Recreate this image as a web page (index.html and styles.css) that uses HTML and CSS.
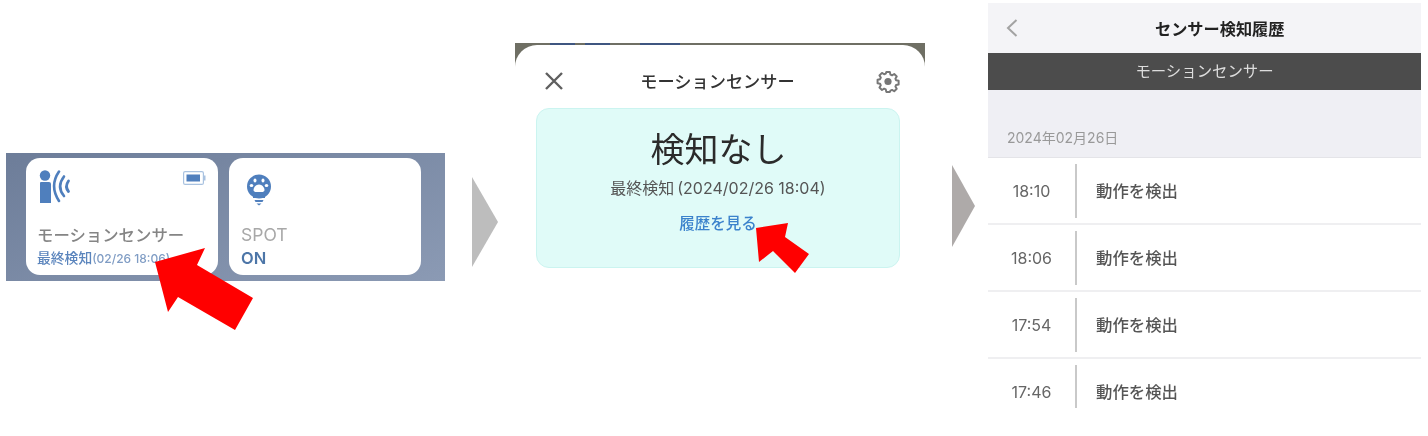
FILE: index.html
```html
<html>
	<head>
		<meta charset="UTF-8">
		<title>モーションセンサー</title>
		<link rel="stylesheet" href="styles.css">
	</head>
	<body>
		<div class="page">
			<div class="tiles">
				<div class="tile">
					<div class="tile-top">
						<svg class="sensor" viewBox="0 0 34 34" width="34" height="34">
							<circle cx="7" cy="5.500" r="5.200" fill="#4f7fbd"/>
							<path d="M3 12h8q2 0 2 2v19H2V13q0-1 1-1z" fill="#4f7fbd"/>
							<g fill="none" stroke="#4f7fbd" stroke-linecap="round">
								<path d="M21 1.500C14.500 11 14.500 21 21 31" stroke-width="2.600"/>
								<path d="M26 6.500C21 13 21 20 26 26" stroke-width="2.600"/>
								<path d="M30.500 11C28 14.500 28 18.500 30.500 21.500" stroke-width="2.800"/>
							</g>
						</svg>
						<svg class="battery" viewBox="0 0 23 14" width="23" height="14">
							<rect x="0.600" y="0.600" width="19.800" height="12.800" rx="1.500" fill="#fff" stroke="#a9c2e0" stroke-width="1.200"/>
							<rect x="3.500" y="3.500" width="13.500" height="7" fill="#4f7fbd"/>
							<path d="M21 4.500h1.500v5H21z" fill="#a9c2e0"/>
						</svg>
					</div>
					<div class="tile-name">モーションセンサー</div>
					<div class="tile-last">最終検知<span class="tile-time">(02/26 18:06)</span></div>
				</div>
				<div class="tile">
					<div class="tile-top">
						<svg class="bulb" viewBox="0 0 26 32" width="26" height="32">
							<circle cx="13" cy="12.500" r="12" fill="#4f7fbd"/>
							<path d="M7 22h12v2H7z" fill="#4f7fbd"/>
							<path d="M8.500 26h9l-1 2h-7zM10.500 29.500h5L13 31.500z" fill="#4f7fbd"/>
							<g fill="#fff">
								<path d="M13 10.500c3 0 5.500 3 5.500 5.500 0 1.500-1.500 2-2.500 2h-6c-1 0-2.500-.5-2.500-2 0-2.500 2.500-5.500 5.500-5.500z"/>
								<ellipse cx="5.500" cy="11.500" rx="1.800" ry="1.500"/>
								<ellipse cx="9" cy="6.500" rx="1.500" ry="1.900"/>
								<ellipse cx="17" cy="6.500" rx="1.500" ry="1.900"/>
								<ellipse cx="20.500" cy="11.500" rx="1.800" ry="1.500"/>
							</g>
						</svg>
					</div>
					<div class="tile-name spot">SPOT</div>
					<div class="tile-on">ON</div>
				</div>
			</div>
			<div class="chevron first"></div>
			<div class="sheet">
				<div class="sheet-peek"></div>
				<div class="sheet-in">
					<div class="sheet-head">
						<svg viewBox="0 0 18 18" width="18" height="18">
							<path d="M1 1l16 16M17 1L1 17" stroke="#5f5f5f" stroke-width="2.400" fill="none"/>
						</svg>
						<div class="sheet-title">モーションセンサー</div>
						<svg viewBox="0 0 24 24" width="24" height="24">
							<path d="M10 2h4l.6 2.800 1.800.8 2.400-1.500 2.800 2.800-1.500 2.400.8 1.800 2.800.6v4l-2.800.6-.8 1.800 1.500 2.400-2.800 2.800-2.400-1.500-1.800.8L14 24h-4l-.6-2.800-1.800-.8-2.400 1.500-2.800-2.800 1.500-2.400-.8-1.800L.3 14.500v-4l2.800-.6.8-1.800-1.500-2.400 2.800-2.800 2.400 1.500 1.800-.8z" transform="translate(1.300 1.300) scale(.9)" fill="none" stroke="#777" stroke-width="2.200" stroke-linejoin="round"/>
							<circle cx="12" cy="12.500" r="3.600" fill="#777"/>
						</svg>
					</div>
					<div class="status">
						<div class="status-big">検知なし</div>
						<div class="status-last">最終検知&#8201;(2024/02/26 18:04)</div>
						<div class="status-link">履歴を見る</div>
					</div>
				</div>
			</div>
			<div class="chevron second"></div>
			<div class="history">
				<div class="history-head">
					<svg viewBox="0 0 12 18" width="12" height="18">
						<path d="M10.500 1L2 9l8.500 8" fill="none" stroke="#a3a3a3" stroke-width="2"/>
					</svg>
					<div class="history-title">センサー検知履歴</div>
				</div>
				<div class="history-bar">モーションセンサー</div>
				<div class="history-date">2024年02月26日</div>
				<div class="row"><div class="row-time">18:10</div><div class="row-line"></div><div class="row-text">動作を検出</div></div>
				<div class="row"><div class="row-time">18:06</div><div class="row-line"></div><div class="row-text">動作を検出</div></div>
				<div class="row"><div class="row-time">17:54</div><div class="row-line"></div><div class="row-text">動作を検出</div></div>
				<div class="row last"><div class="row-time">17:46</div><div class="row-line"></div><div class="row-text">動作を検出</div></div>
			</div>
			<svg class="pointers" viewBox="0 0 1428 436" width="1428" height="436">
				<polygon points="205,248 155,262 168,312 178,297 235,330 253,298 197,265" fill="#ff0000"/>
				<polygon points="788,223 756,228 759,262 773,251 795,273 809,254 785,237" fill="#ff0000"/>
			</svg>
		</div>
	</body>
</html>
```

FILE: styles.css
```css
body {
	margin: 0;
	background: #fff;
	font-family: "Inter", "Noto Sans CJK JP", sans-serif;
}
.page {
	display: flex;
	align-items: flex-start;
	position: relative;
	width: 1428px;
	height: 436px;
	overflow: hidden;
}
.tiles, .sheet, .history {
	filter: blur(0.6px);
}

/* first panel */
.tiles {
	display: flex;
	gap: 11px;
	box-sizing: border-box;
	width: 439px;
	height: 128px;
	margin: 153px 0 0 6px;
	padding: 5px 0 0 20px;
	background: linear-gradient(160deg, #6d7d99, #8b9ab4);
}
.tile {
	box-sizing: border-box;
	width: 192px;
	height: 117px;
	padding: 12px 11px 0 11px;
	background: #fff;
	border-radius: 14px;
}
.tile-top {
	display: flex;
	justify-content: space-between;
	height: 53px;
}
.sensor { margin-left: 1px; }
.battery { margin: 1px 1px 0 0; }
.bulb { margin: 4px 0 0 6px; }
.tile-name {
	font-size: 16.400px;
	font-weight: 500;
	line-height: 24px;
	color: #858585;
	white-space: nowrap;
}
.tile-name.spot {
	font-size: 17.500px;
	font-weight: 400;
	margin-left: 1px;
	color: #a8a8a8;
}
.tile-last {
	font-size: 13.800px;
	font-weight: 500;
	line-height: 20px;
	margin-top: 1px;
	color: #5b85bd;
	white-space: nowrap;
}
.tile-time { font-size: 12px; color: #7f9cc4; }
.tile-on {
	font-size: 16.500px;
	font-weight: 600;
	line-height: 20px;
	margin: 1px 0 0 1px;
	color: #4d76a8;
}

/* arrows between panels */
.chevron {
	background: #bdbdbd;
	clip-path: polygon(0 0, 100% 50%, 0 100%);
}
.chevron.first {
	flex: none;
	width: 26px;
	height: 90px;
	margin: 177px 0 0 27px;
}
.chevron.second {
	flex: none;
	width: 23px;
	height: 82px;
	margin: 165px 0 0 27px;
	background: #aeaaa9;
}

/* second panel */
.sheet {
	flex: none;
	width: 410px;
	height: 226px;
	margin: 43px 0 0 17px;
	background: linear-gradient(#6f6f64 24px, #fff 24px);
}
/* bits of the page behind the sheet, only their lower edge shows */
.sheet-peek {
	height: 2px;
	background: linear-gradient(90deg,
		transparent 35px, #3f5680 35px, #3f5680 60px, transparent 60px,
		transparent 70px, #3f5680 70px, #3f5680 95px, transparent 95px,
		transparent 125px, #3f5680 125px, #3f5680 165px, transparent 165px);
}
.sheet-in {
	box-sizing: border-box;
	height: 224px;
	padding: 0 21px;
	background: #fff;
	border-radius: 22px 22px 0 0;
}
.sheet-head {
	display: flex;
	align-items: center;
	justify-content: space-between;
	height: 63px;
	padding: 9px 4px 0 9px;
	box-sizing: border-box;
}
.sheet-title {
	font-size: 17.200px;
	font-weight: 500;
	color: #333;
	margin: 0 4px 2px 0;
}
.status {
	box-sizing: border-box;
	width: 364px;
	height: 160px;
	text-align: center;
	background: #e0fbf8;
	border: 1.500px solid #cbf4f0;
	border-radius: 13px;
}
.status-big {
	font-size: 34px;
	line-height: 44px;
	margin: 19px 0 0 1px;
	color: #2b2b2b;
}
.status-last {
	font-size: 16px;
	line-height: 22px;
	margin-top: 5px;
	color: #555;
}
.status-link {
	font-size: 15.500px;
	font-weight: 500;
	line-height: 22px;
	margin-top: 14px;
	color: #3b82cc;
}

/* third panel */
.history {
	flex: none;
	width: 433px;
	margin: 3px 0 0 13px;
}
.history-head {
	display: flex;
	align-items: center;
	height: 50px;
	padding-left: 18px;
	box-sizing: border-box;
	background: #f4f4f7;
}
.history-title {
	font-size: 16.200px;
	font-weight: 700;
	margin-left: 137px;
	color: #222;
}
.history-bar {
	height: 37px;
	line-height: 37px;
	font-size: 15.400px;
	text-align: center;
	color: #ddd;
	background: #4c4c4c;
}
.history-date {
	box-sizing: border-box;
	height: 68px;
	padding: 37px 0 0 19px;
	font-size: 14px;
	line-height: 22px;
	color: #999;
	background: #efeff4;
	border-bottom: 1px solid #e4e4e8;
}
.row {
	display: flex;
	box-sizing: border-box;
	height: 67px;
	padding-top: 6px;
	border-bottom: 2px solid #efeff1;
}
.row.last { border-bottom: 0; height: 51px; }
.row-time {
	width: 87px;
	height: 54px;
	line-height: 54px;
	font-size: 16px;
	text-align: center;
	color: #666;
}
.row-line {
	width: 2px;
	height: 54px;
	background: #c9c9c9;
}
.row.last .row-line { height: 43px; }
.row-text {
	margin-left: 19px;
	line-height: 54px;
	font-size: 16.400px;
	font-weight: 500;
	color: #555;
}

/* red pointers over the screenshots */
.pointers {
	position: absolute;
	left: 0;
	top: 0;
}
```
